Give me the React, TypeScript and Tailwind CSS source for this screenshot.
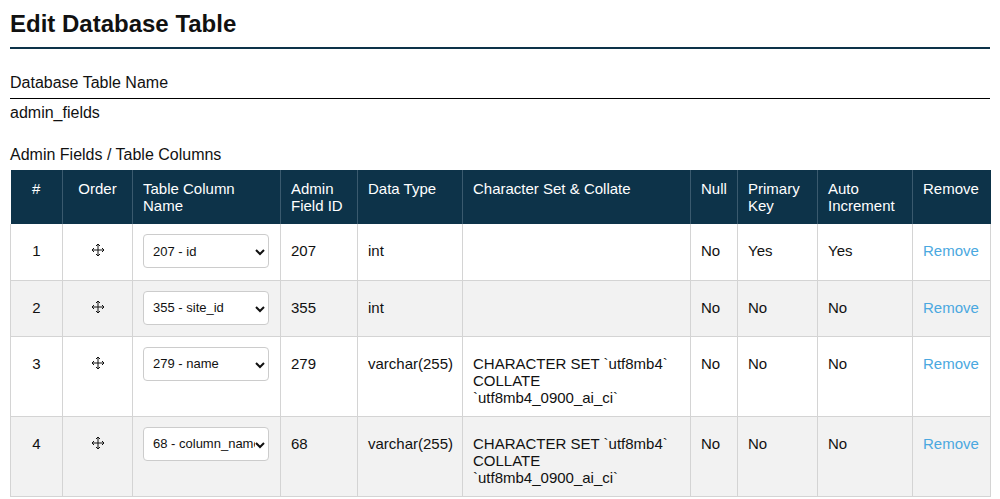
import React from "react";

const rows = [
  ["1", "207 - id", "207", "int", "", "No", "Yes", "Yes"],
  ["2", "355 - site_id", "355", "int", "", "No", "No", "No"],
  ["3", "279 - name", "279", "varchar(255)", "CHARACTER SET `utf8mb4` COLLATE `utf8mb4_0900_ai_ci`", "No", "No", "No"],
  ["4", "68 - column_name", "68", "varchar(255)", "CHARACTER SET `utf8mb4` COLLATE `utf8mb4_0900_ai_ci`", "No", "No", "No"],
];

const Move = () => (
  <svg width="14" height="14" viewBox="0 0 14 14" fill="none" stroke="#111" strokeWidth="1">
    <path d="M7 1v12M1 7h12" />
    <path d="M5 3l2-2 2 2M5 11l2 2 2-2M3 5L1 7l2 2M11 5l2 2-2 2" />
  </svg>
);

export default function App() {
  const thb = "border-r border-[#3a5a6e] px-[10px] pt-[10px] align-top font-normal";
  const th = thb + " text-left";
  const td = "border-r border-[#d4d4d4] px-[10px] pt-[18px] align-top";
  return (
    <div className="px-[10px] pt-[10px] text-[#111]" style={{ fontFamily: "Arial, 'Liberation Sans', sans-serif" }}>
      <h1 className="text-[24px] font-bold leading-[28px] pb-[9px] border-b-2 border-[#0d3349]">Edit Database Table</h1>
      <div className="mt-[25px] text-[16px] leading-[18px] pb-[6px] border-b border-black">Database Table Name</div>
      <div className="mt-[5px] text-[16px] leading-[18px]">admin_fields</div>
      <div className="mt-[24px] text-[16px] leading-[18px] mb-[6px]">Admin Fields / Table Columns</div>
      <table className="w-[980px] border-collapse text-[15px] leading-[17px] table-fixed">
        <colgroup>
          <col className="w-[52px]" /><col className="w-[70px]" /><col className="w-[148px]" /><col className="w-[77px]" />
          <col className="w-[105px]" /><col className="w-[228px]" /><col className="w-[47px]" /><col className="w-[80px]" />
          <col className="w-[95px]" /><col className="w-[78px]" />
        </colgroup>
        <thead>
          <tr className="bg-[#0d3349] text-white h-[54px]">
            <th className={thb + " text-center"}>#</th>
            <th className={thb + " text-center"}>Order</th>
            <th className={th}>Table Column Name</th>
            <th className={th}>Admin Field ID</th>
            <th className={th}>Data Type</th>
            <th className={th}>Character Set &amp; Collate</th>
            <th className={th}>Null</th>
            <th className={th}>Primary Key</th>
            <th className={th}>Auto Increment</th>
            <th className={th + " border-r-0"}>Remove</th>
          </tr>
        </thead>
        <tbody>
          {rows.map((r, i) => (
            <tr key={i} className={(i % 2 ? "bg-[#f2f2f2]" : "bg-white") + " border-b border-[#d4d4d4] " + (r[4] ? "h-[80px]" : "h-[56px]")}>
              <td className={td + " text-center border-l"}>{r[0]}</td>
              <td className={td + " text-center"}><div className="flex justify-center pt-[1px]"><Move /></div></td>
              <td className="border-r border-[#d4d4d4] px-[10px] pt-[10px] align-top">
                <div className="relative w-[126px] h-[34px] rounded-[4px] border border-[#ccc] bg-white text-[13px] flex items-center pl-[9px] overflow-hidden whitespace-nowrap">
                  {r[1]}
                  <svg className="absolute right-[3px] top-[13px] bg-white" width="10" height="8" viewBox="0 0 10 8"><path d="M1 2l4 4 4-4" stroke="#111" strokeWidth="2" fill="none" /></svg>
                </div>
              </td>
              <td className={td}>{r[2]}</td>
              <td className={td}>{r[3]}</td>
              <td className="border-r border-[#d4d4d4] pl-[10px] pr-[20px] pt-[18px] align-top">{r[4]}</td>
              <td className={td}>{r[5]}</td>
              <td className={td}>{r[6]}</td>
              <td className={td}>{r[7]}</td>
              <td className={td + " text-[#4aa8e0]"}>Remove</td>
            </tr>
          ))}
        </tbody>
      </table>
    </div>
  );
}
